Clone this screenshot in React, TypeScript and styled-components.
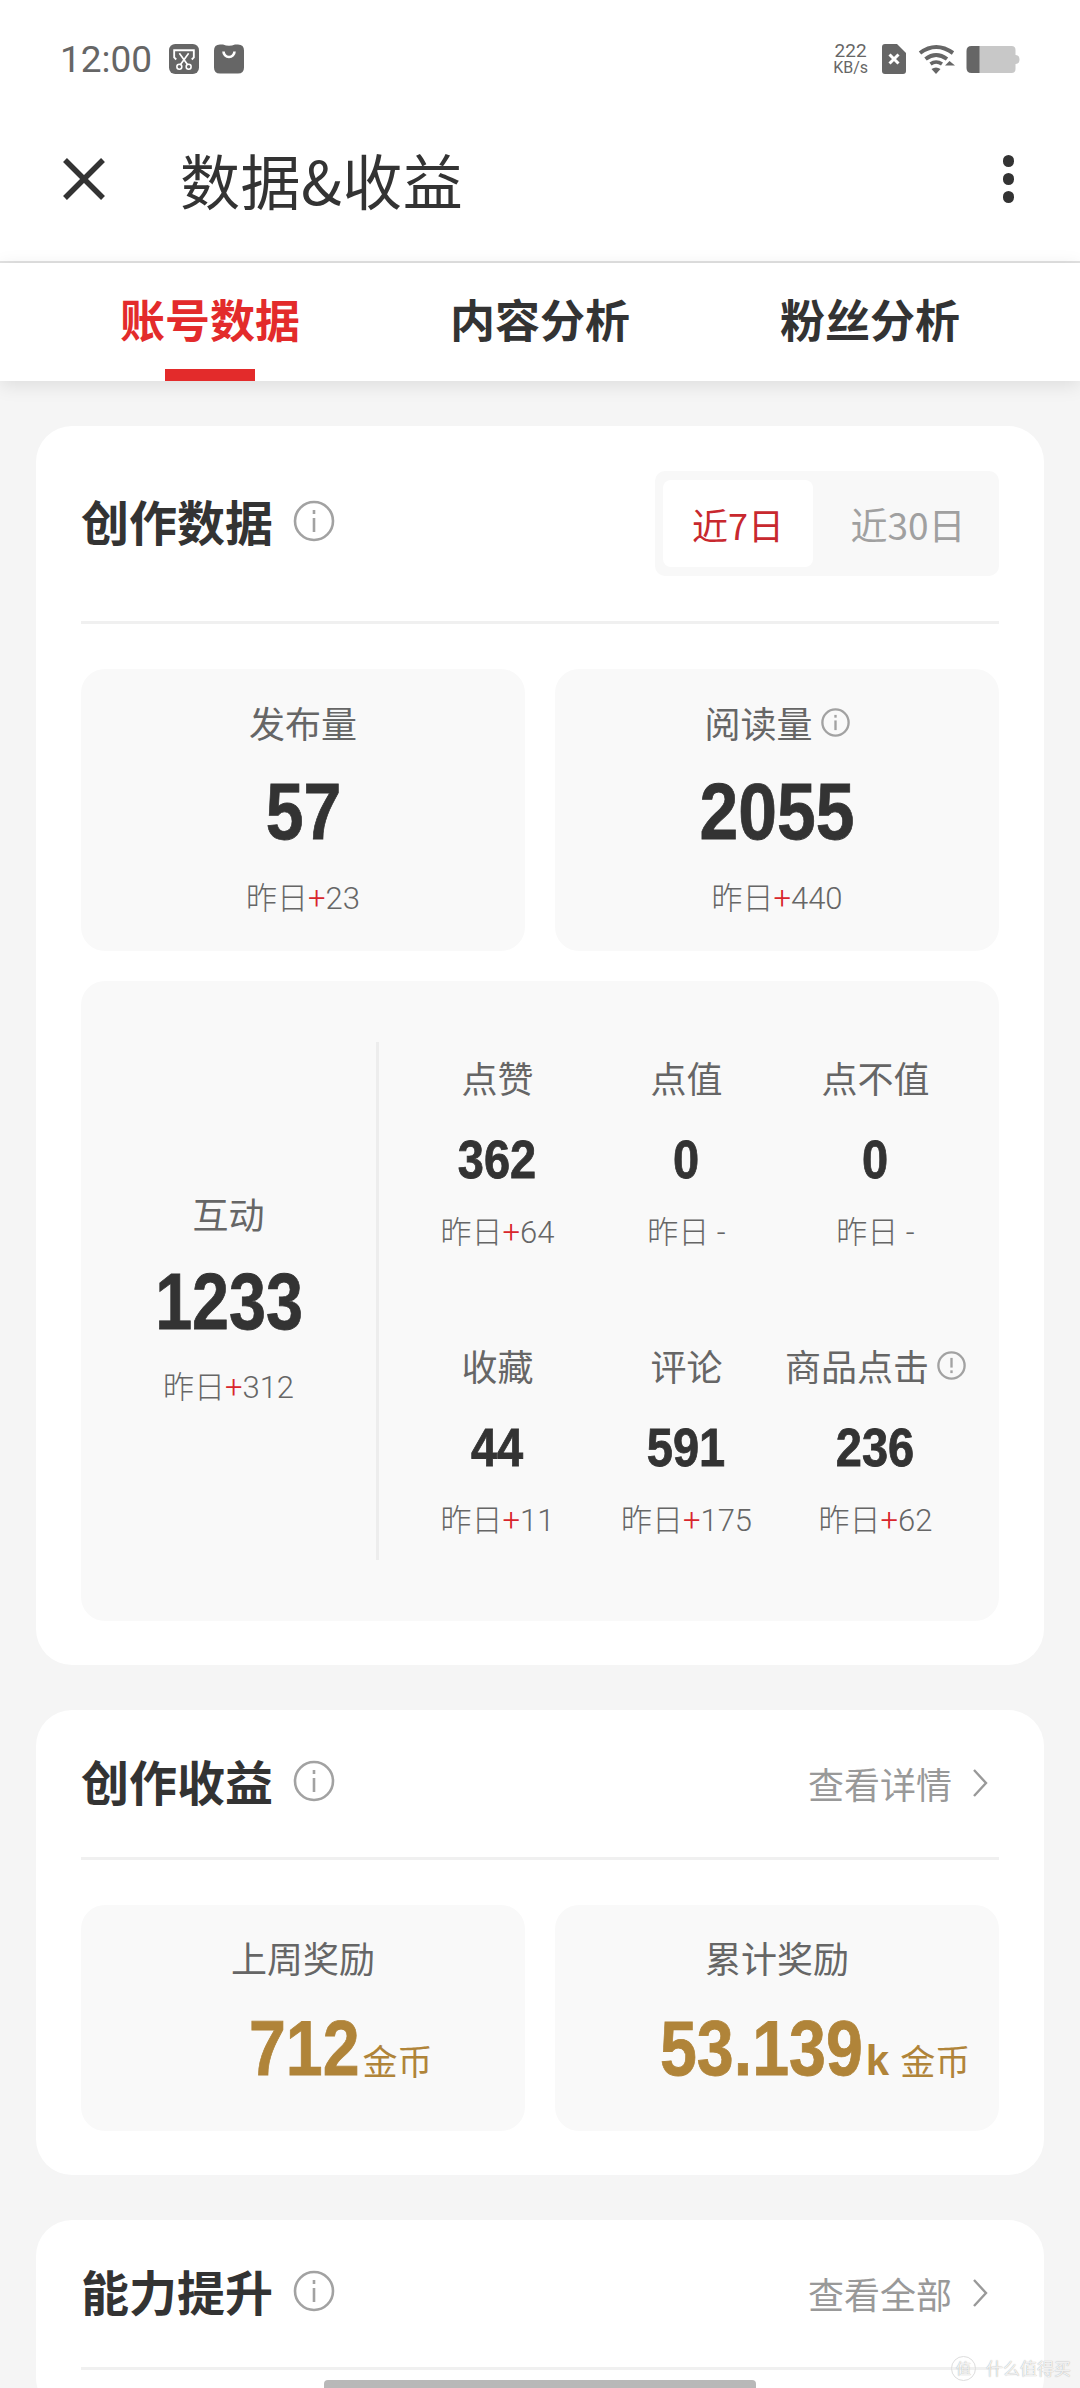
import React from "react"
import styled, { createGlobalStyle } from "styled-components"

const GlobalStyle = createGlobalStyle`
  html, body {
    margin: 0;
    padding: 0;
    background: #f5f5f5;
  }
  * {
    box-sizing: border-box;
  }
`

const cjk = `"Noto Sans CJK SC", "Noto Sans", sans-serif`
const latin = `Roboto, "Noto Sans CJK SC", sans-serif`
const digits = `"Liberation Sans", sans-serif`

const Page = styled.div`
  position: relative;
  width: 1080px;
  height: 2388px;
  overflow: hidden;
  background: #f5f5f5;
  font-family: ${cjk};
`

const StatusBar = styled.div`
  display: flex;
  align-items: center;
  justify-content: space-between;
  height: 118px;
  padding: 0 60px;
  background: #fff;
`

const StatusGroup = styled.div`
  display: flex;
  align-items: center;
`

const Clock = styled.span`
  font-family: ${latin};
  font-size: 37px;
  color: #666;
  margin-right: 17px;
`

const Speed = styled.div`
  display: flex;
  flex-direction: column;
  align-items: center;
  font-family: ${latin};
  color: #666;
  margin-right: 14px;
`

const SpeedValue = styled.span`
  font-size: 19px;
  line-height: 18px;
`

const SpeedUnit = styled.span`
  font-size: 16px;
  line-height: 16px;
`

const StatusIcon = styled.svg<{ $gap?: number }>`
  display: block;
  margin-right: ${p => p.$gap ?? 0}px;
`

const Header = styled.div`
  display: flex;
  align-items: center;
  height: 145px;
  padding: 0 66px 21px 63px;
  background: #fff;
  border-bottom: 2px solid #e2e2e2;
`

const HeaderTitle = styled.h1`
  flex: 1;
  margin: 0 0 0 75px;
  font-size: 60px;
  font-weight: 400;
  letter-spacing: 0.5px;
  color: #333;
  line-height: 1;
`

const MoreDots = styled.div`
  display: flex;
  flex-direction: column;
  gap: 6.5px;
`

const Dot = styled.span`
  width: 11.5px;
  height: 11.5px;
  border-radius: 50%;
  background: #333;
`

const TabBar = styled.div`
  position: relative;
  display: grid;
  grid-template-columns: repeat(3, 330px);
  height: 118px;
  padding: 0 45px;
  background: #fff;
  box-shadow: 0 4px 18px rgba(0, 0, 0, 0.1);
`

const Tab = styled.div<{ $active?: boolean }>`
  position: relative;
  display: flex;
  justify-content: center;
  padding-top: 24px;
  font-size: 45px;
  font-weight: 700;
  line-height: 64px;
  color: ${p => (p.$active ? "#e32b2b" : "#333")};
  &::after {
    content: "";
    display: ${p => (p.$active ? "block" : "none")};
    position: absolute;
    bottom: 0;
    left: 120px;
    width: 90px;
    height: 12px;
    background: #e32b2b;
  }
`

const Content = styled.div`
  display: flex;
  flex-direction: column;
  gap: 45px;
  padding: 45px 36px 0;
`

const Card = styled.section`
  padding: 0 45px 44px;
  background: #fff;
  border-radius: 36px;
`

const CardHeader = styled.div<{ $height: number }>`
  display: flex;
  align-items: center;
  justify-content: space-between;
  height: ${p => p.$height}px;
  border-bottom: 3px solid #f0f0f0;
`

const TitleRow = styled.div`
  display: flex;
  align-items: center;
  gap: 20px;
  padding-bottom: 6px;
`

const CardTitle = styled.h2`
  margin: 0;
  font-size: 48px;
  font-weight: 700;
  color: #333;
  line-height: 1.2;
`

const Segmented = styled.div`
  display: flex;
  align-items: center;
  width: 344px;
  height: 105px;
  padding: 0 2px 0 8px;
  background: #f8f8f8;
  border-radius: 10px;
`

const Segment = styled.div<{ $active?: boolean }>`
  display: flex;
  align-items: center;
  justify-content: center;
  width: ${p => (p.$active ? 150 : 178)}px;
  height: 87px;
  margin-left: ${p => (p.$active ? 0 : 6)}px;
  font-size: ${p => (p.$active ? 36 : 37)}px;
  color: ${p => (p.$active ? "#c8282e" : "#a0a0a0")};
  background: ${p => (p.$active ? "#fff" : "transparent")};
  border-radius: 8px;
`

const LinkRow = styled.div`
  display: flex;
  align-items: center;
  gap: 20px;
  padding: 0 11px 2px 0;
  font-size: 36px;
  color: #999;
`

const TwoUp = styled.div`
  display: grid;
  grid-template-columns: 444px 444px;
  gap: 30px;
  margin-top: 45px;
`

const Panel = styled.div<{ $height: number }>`
  height: ${p => p.$height}px;
  background: #f9f9f9;
  border-radius: 24px;
`

const Centered = styled.div<{ $top: number }>`
  display: flex;
  flex-direction: column;
  align-items: center;
  padding-top: ${p => p.$top}px;
`

const Label = styled.div`
  display: flex;
  align-items: center;
  gap: 8px;
  height: 50px;
  font-size: 36px;
  color: #666;
`

const Value = styled.div<{ $size: number; $height: number; $top: number; $squeeze: number }>`
  height: ${p => p.$height}px;
  margin-top: ${p => p.$top}px;
  font-family: ${digits};
  font-size: ${p => p.$size}px;
  font-weight: 700;
  line-height: ${p => p.$height}px;
  color: #333;
  -webkit-text-stroke: 0.8px #333;
  transform: scaleX(${p => p.$squeeze});
`

const Delta = styled.div<{ $top: number }>`
  height: 40px;
  margin-top: ${p => p.$top}px;
  font-family: ${latin};
  font-size: 31px;
  font-weight: 300;
  line-height: 40px;
  color: #666;
  white-space: pre;
`

const Plus = styled.span`
  color: #d8262c;
`

const Breakdown = styled(Panel)`
  display: flex;
  margin-top: 30px;
  padding: 61px 0;
`

const TotalColumn = styled.div`
  flex: 0 0 298px;
  display: flex;
  flex-direction: column;
  align-items: center;
  justify-content: center;
  padding-bottom: 6px;
  border-right: 3px solid #ededed;
`

const MetricGrid = styled.div`
  display: grid;
  grid-template-columns: repeat(3, 189px);
  grid-auto-rows: 288px;
  padding-left: 24px;
`

const RewardRow = styled.div`
  display: flex;
  align-items: baseline;
  justify-content: center;
  align-self: stretch;
  height: 90px;
  margin-top: 21px;
  padding-left: 76px;
  color: #b08439;
`

const RewardValue = styled.span<{ $width: number }>`
  display: inline-block;
  width: ${p => p.$width}px;
  font-family: ${digits};
  font-size: 78px;
  font-weight: 700;
  line-height: 90px;
  white-space: nowrap;
  -webkit-text-stroke: 0.8px #b08439;
  transform: scaleX(0.85);
  transform-origin: left center;
`

const RewardSuffix = styled.span`
  margin-left: 3px;
  font-family: ${digits};
  font-size: 42px;
  font-weight: 700;
`

const RewardUnit = styled.span`
  margin-left: 11px;
  font-size: 35px;
  line-height: 34px;
`

const HomeBar = styled.div`
  position: absolute;
  left: 324px;
  bottom: 0;
  width: 432px;
  height: 8px;
  background: #b8b8b8;
  border-radius: 4px 4px 0 0;
`

const Watermark = styled.div`
  position: absolute;
  left: 951px;
  top: 2355px;
  display: flex;
  align-items: center;
  gap: 10px;
  font-size: 17px;
  line-height: 26px;
  color: rgba(255, 255, 255, 0.85);
  text-shadow: 0 0 1px #999;
`

const WatermarkBadge = styled.span`
  width: 25px;
  height: 25px;
  border-radius: 50%;
  border: 1px solid #ddd;
  font-size: 15px;
  line-height: 22px;
  text-align: center;
`

const InfoIcon = ({ size = 42, bang = false }: { size?: number; bang?: boolean }) => (
  <svg width={size} height={size} viewBox="0 0 42 42" fill="none" stroke="#a2a2a2" strokeWidth={size > 35 ? 2.6 : 3.4}>
    <circle cx="21" cy="21" r="19" />
    {bang ? (
      <>
        <line x1="21" y1="10" x2="21" y2="24" />
        <line x1="21" y1="28" x2="21" y2="32" />
      </>
    ) : (
      <>
        <line x1="21" y1="10" x2="21" y2="14" />
        <line x1="21" y1="18" x2="21" y2="32" />
      </>
    )}
  </svg>
)

const Chevron = () => (
  <svg width="16" height="30" viewBox="0 0 16 30" fill="none" stroke="#999" strokeWidth="2.4">
    <polyline points="2,2 14,15 2,28" />
  </svg>
)

const Trend = ({ value }: { value: string | null }) =>
  value === null ? (
    <>
      昨日 <span>-</span>
    </>
  ) : (
    <>
      昨日<Plus>+</Plus>
      {value}
    </>
  )

const metrics: { label: string; value: string; delta: string | null; bang?: boolean }[] = [
  { label: "点赞", value: "362", delta: "64" },
  { label: "点值", value: "0", delta: null },
  { label: "点不值", value: "0", delta: null },
  { label: "收藏", value: "44", delta: "11" },
  { label: "评论", value: "591", delta: "175" },
  { label: "商品点击", value: "236", delta: "62", bang: true },
]

const App = () => {
  return (
    <Page>
      <GlobalStyle />
      <StatusBar>
        <StatusGroup>
          <Clock>12:00</Clock>
          <StatusIcon width="30" height="30" viewBox="0 0 29 29" $gap={15}>
            <rect width="29" height="29" rx="6" fill="#666" />
            <path d="M7 15 L5 13 V6 H24 V13 L22 15" fill="none" stroke="#fff" strokeWidth="1.8" />
            <path d="M10 9 L18 20 M19 9 L11 20" stroke="#fff" strokeWidth="1.6" />
            <circle cx="10" cy="22" r="2.4" fill="#666" stroke="#fff" strokeWidth="1.5" />
            <circle cx="19" cy="22" r="2.4" fill="#666" stroke="#fff" strokeWidth="1.5" />
          </StatusIcon>
          <StatusIcon width="30" height="30" viewBox="0 0 30 29">
            <path d="M6 0 H9 Q15 2.5 21 0 H24 Q30 0 30 6 V23 Q30 29 24 29 H6 Q0 29 0 23 V6 Q0 0 6 0 Z" fill="#666" />
            <path d="M9.5 7 A5.5 5.5 0 0 0 20.5 7" fill="none" stroke="#fff" strokeWidth="2.6" />
          </StatusIcon>
        </StatusGroup>
        <StatusGroup>
          <Speed>
            <SpeedValue>222</SpeedValue>
            <SpeedUnit>KB/s</SpeedUnit>
          </Speed>
          <StatusIcon width="24" height="30" viewBox="0 0 24 30" $gap={12}>
            <path d="M3 0 H15 L24 9 V27 Q24 30 21 30 H3 Q0 30 0 27 V3 Q0 0 3 0 Z" fill="#666" />
            <path d="M7.5 10.5 L16.5 19.5 M16.5 10.5 L7.5 19.5" stroke="#fff" strokeWidth="3" />
          </StatusIcon>
          <StatusIcon width="37" height="30" viewBox="0 0 37 30" $gap={11}>
            <path d="M2 9 Q18 -3 35 9" fill="none" stroke="#666" strokeWidth="4" />
            <path d="M7.5 15 Q18 7 29 15" fill="none" stroke="#666" strokeWidth="4" />
            <path d="M12.5 20 Q18 16 24 20" fill="none" stroke="#666" strokeWidth="3.6" />
            <path d="M13.5 25 Q18 22 22.5 25 L18 30 Z" fill="#666" />
            <path d="M31.5 17 L37 21.5 H27 Z" fill="#666" />
          </StatusIcon>
          <StatusIcon width="54" height="27" viewBox="0 0 53 27">
            <path d="M12 0 H45 Q49 0 49 4 V9 Q53 9 53 13.5 Q53 18 49 18 V23 Q49 27 45 27 H12 Z" fill="#c8c8c8" />
            <path d="M5 0 H13 V27 H5 Q0 27 0 22 V5 Q0 0 5 0 Z" fill="#666" />
          </StatusIcon>
        </StatusGroup>
      </StatusBar>

      <Header>
        <svg width="42" height="42" viewBox="0 0 42 42" stroke="#333" strokeWidth="5.4">
          <line x1="2" y1="2" x2="40" y2="40" />
          <line x1="40" y1="2" x2="2" y2="40" />
        </svg>
        <HeaderTitle>数据&amp;收益</HeaderTitle>
        <MoreDots>
          <Dot />
          <Dot />
          <Dot />
        </MoreDots>
      </Header>

      <TabBar>
        <Tab $active>账号数据</Tab>
        <Tab>内容分析</Tab>
        <Tab>粉丝分析</Tab>
      </TabBar>

      <Content>
        <Card>
          <CardHeader $height={198}>
            <TitleRow>
              <CardTitle>创作数据</CardTitle>
              <InfoIcon />
            </TitleRow>
            <Segmented>
              <Segment $active>近7日</Segment>
              <Segment>近30日</Segment>
            </Segmented>
          </CardHeader>
          <TwoUp>
            <Panel $height={282}>
              <Centered $top={28}>
                <Label>发布量</Label>
                <Value $size={80} $height={84} $top={23} $squeeze={0.85}>57</Value>
                <Delta $top={25}><Trend value="23" /></Delta>
              </Centered>
            </Panel>
            <Panel $height={282}>
              <Centered $top={28}>
                <Label>阅读量<InfoIcon size={29} /></Label>
                <Value $size={80} $height={84} $top={23} $squeeze={0.87}>2055</Value>
                <Delta $top={25}><Trend value="440" /></Delta>
              </Centered>
            </Panel>
          </TwoUp>
          <Breakdown $height={640}>
            <TotalColumn>
              <Label>互动</Label>
              <Value $size={80} $height={84} $top={22} $squeeze={0.83}>1233</Value>
              <Delta $top={24}><Trend value="312" /></Delta>
            </TotalColumn>
            <MetricGrid>
              {metrics.map(metric => (
                <Centered $top={10} key={metric.label}>
                  <Label>
                    {metric.label}
                    {metric.bang && <InfoIcon size={29} bang />}
                  </Label>
                  <Value $size={54} $height={60} $top={27} $squeeze={0.87}>{metric.value}</Value>
                  <Delta $top={24}><Trend value={metric.delta} /></Delta>
                </Centered>
              ))}
            </MetricGrid>
          </Breakdown>
        </Card>

        <Card>
          <CardHeader $height={150}>
            <TitleRow>
              <CardTitle>创作收益</CardTitle>
              <InfoIcon />
            </TitleRow>
            <LinkRow>查看详情<Chevron /></LinkRow>
          </CardHeader>
          <TwoUp>
            <Panel $height={226}>
              <Centered $top={27}>
                <Label>上周奖励</Label>
                <RewardRow>
                  <RewardValue $width={102}>712</RewardValue>
                  <RewardUnit>金币</RewardUnit>
                </RewardRow>
              </Centered>
            </Panel>
            <Panel $height={226}>
              <Centered $top={27}>
                <Label>累计奖励</Label>
                <RewardRow>
                  <RewardValue $width={203}>53.139</RewardValue>
                  <RewardSuffix>k</RewardSuffix>
                  <RewardUnit>金币</RewardUnit>
                </RewardRow>
              </Centered>
            </Panel>
          </TwoUp>
        </Card>

        <Card>
          <CardHeader $height={150}>
            <TitleRow>
              <CardTitle>能力提升</CardTitle>
              <InfoIcon />
            </TitleRow>
            <LinkRow>查看全部<Chevron /></LinkRow>
          </CardHeader>
        </Card>
      </Content>

      <Watermark>
        <WatermarkBadge>值</WatermarkBadge>
        什么值得买
      </Watermark>
      <HomeBar />
    </Page>
  )
}

export default App
